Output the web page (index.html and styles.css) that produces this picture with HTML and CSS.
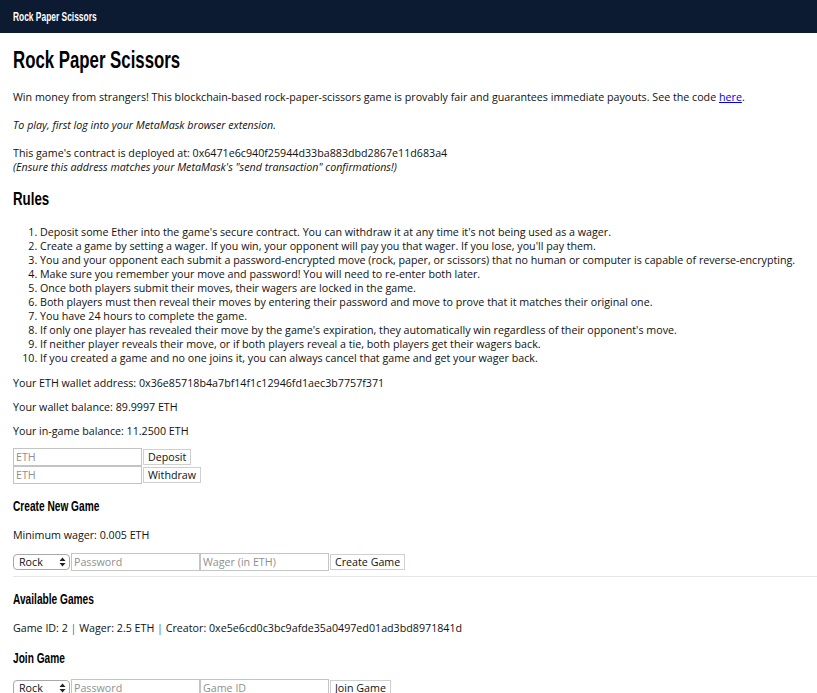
FILE: index.html
```html
<!DOCTYPE html>
<html>
<head>
<meta charset="utf-8">
<title>Rock Paper Scissors</title>
<link rel="stylesheet" href="styles.css">
</head>
<body>
<nav class="navbar"><span class="brand"><span class="cond">Rock Paper Scissors</span></span></nav>
<main class="main">
  <h1 class="title"><span class="cond">Rock Paper Scissors</span></h1>
  <p class="p-intro">Win money from strangers! This blockchain-based rock-paper-scissors game is provably fair and guarantees immediate payouts. See the code <a href="#" class="link">here</a>.</p>
  <p class="p-note"><em>To play, first log into your MetaMask browser extension.</em></p>
  <p class="p-note">This game's contract is deployed at: 0x6471e6c940f25944d33ba883dbd2867e11d683a4<br><em>(Ensure this address matches your MetaMask's "send transaction" confirmations!)</em></p>
  <h2 class="h-rules"><span class="cond">Rules</span></h2>
  <ol class="rules">
    <li>Deposit some Ether into the game's secure contract. You can withdraw it at any time it's not being used as a wager.</li>
    <li>Create a game by setting a wager. If you win, your opponent will pay you that wager. If you lose, you'll pay them.</li>
    <li>You and your opponent each submit a password-encrypted move (rock, paper, or scissors) that no human or computer is capable of reverse-encrypting.</li>
    <li>Make sure you remember your move and password! You will need to re-enter both later.</li>
    <li>Once both players submit their moves, their wagers are locked in the game.</li>
    <li>Both players must then reveal their moves by entering their password and move to prove that it matches their original one.</li>
    <li>You have 24 hours to complete the game.</li>
    <li>If only one player has revealed their move by the game's expiration, they automatically win regardless of their opponent's move.</li>
    <li>If neither player reveals their move, or if both players reveal a tie, both players get their wagers back.</li>
    <li>If you created a game and no one joins it, you can always cancel that game and get your wager back.</li>
  </ol>
  <p class="p-info">Your ETH wallet address: 0x36e85718b4a7bf14f1c12946fd1aec3b7757f371</p>
  <p class="p-info">Your wallet balance: 89.9997 ETH</p>
  <p class="p-info">Your in-game balance: 11.2500 ETH</p>
  <div class="funds">
    <div class="row"><input class="field" placeholder="ETH"><button class="btn">Deposit</button></div>
    <div class="row"><input class="field" placeholder="ETH"><button class="btn">Withdraw</button></div>
  </div>
  <h3 class="h-sec"><span class="cond">Create New Game</span></h3>
  <p class="p-sec">Minimum wager: 0.005 ETH</p>
  <div class="row row-game">
    <span class="select"><span class="select-text">Rock</span><svg class="select-arrows" width="7" height="10" viewBox="0 0 7 10"><path d="M0.5 4 L3.5 0.5 L6.5 4 Z M0.5 6 L3.5 9.5 L6.5 6 Z" fill="#222"/></svg></span>
    <input class="field" type="password" placeholder="Password">
    <input class="field" placeholder="Wager (in ETH)">
    <button class="btn">Create Game</button>
  </div>
  <hr class="rule">
  <h3 class="h-sec h-avail"><span class="cond">Available Games</span></h3>
  <p class="p-sec">Game ID: 2 <span class="sep">|</span> Wager: 2.5 ETH <span class="sep">|</span> Creator: 0xe5e6cd0c3bc9afde35a0497ed01ad3bd8971841d</p>
  <h3 class="h-sec h-join"><span class="cond">Join Game</span></h3>
  <div class="row row-game">
    <span class="select"><span class="select-text">Rock</span><svg class="select-arrows" width="7" height="10" viewBox="0 0 7 10"><path d="M0.5 4 L3.5 0.5 L6.5 4 Z M0.5 6 L3.5 9.5 L6.5 6 Z" fill="#222"/></svg></span>
    <input class="field" type="password" placeholder="Password">
    <input class="field" placeholder="Game ID">
    <button class="btn">Join Game</button>
  </div>
</main>
</body>
</html>
```
FILE: styles.css
```css
* { box-sizing: border-box; }
html, body { margin: 0; padding: 0; background: #fff; }
body {
  font-family: "Open Sans", "DejaVu Sans", sans-serif;
  font-size: 10.7px;
  line-height: 14px;
  color: #111;
}
.cond {
  display: inline-block;
  transform: scaleX(0.7);
  transform-origin: left center;
  white-space: nowrap;
}
.navbar {
  height: 33px;
  background: #0d1b32;
  padding-left: 13px;
  display: flex;
  align-items: center;
}
.brand {
  color: #fff;
  font-family: "Liberation Sans", Arial, sans-serif;
  font-weight: bold;
  font-size: 12px;
  line-height: 14px;
}
.main { padding: 0 0 20px 13px; }
.title {
  font-family: "Liberation Sans", Arial, sans-serif;
  font-weight: bold;
  font-size: 24px;
  line-height: 30px;
  margin: 12px 0 15px;
  color: #000;
}
p { margin: 0; }
.p-intro { margin-bottom: 14px; }
.p-note { margin-bottom: 14px; }
.link { color: #0000ee; text-decoration: underline; }
.h-rules {
  font-family: "Liberation Sans", Arial, sans-serif;
  font-weight: bold;
  font-size: 19px;
  line-height: 22px;
  margin: 13px 0 15px;
  color: #000;
}
.rules { margin: 0 0 11px; padding-left: 27px; }
.rules li { line-height: 14px; }
.p-info { margin-bottom: 10px; }
.funds { margin-top: 2px; margin-bottom: 13px; }
.row { display: flex; align-items: flex-end; }
.field {
  width: 129px;
  height: 18px;
  border: 1px solid #c4c4c4;
  padding: 0 2px;
  font-family: "Open Sans", "DejaVu Sans", sans-serif;
  font-size: 10.7px;
  color: #222;
  margin: 0;
  outline: none;
  background: #fff;
}
.field::placeholder { color: #8f8f8f; }
.btn {
  height: 16px;
  margin: 0 0 1px 1px;
  padding: 0 4px;
  border: 1px solid #cfcfcf;
  background: #fff;
  font-family: "Open Sans", "DejaVu Sans", sans-serif;
  font-size: 10.7px;
  line-height: 14px;
  color: #111;
}
.h-sec {
  font-family: "Liberation Sans", Arial, sans-serif;
  font-weight: bold;
  font-size: 14.5px;
  line-height: 18px;
  margin: 0 0 13px;
  color: #000;
}
.p-sec { margin-bottom: 11px; }
.row-game { align-items: center; }
.select {
  position: relative;
  width: 57px;
  height: 16px;
  border: 1px solid #a8a8a8;
  border-radius: 4px;
  background: #fff;
  display: flex;
  align-items: center;
  padding-left: 5px;
  margin-right: 1px;
}
.select-text { font-size: 10.7px; line-height: 14px; }
.select-arrows { position: absolute; right: 3px; top: 2px; }
.rule {
  border: 0;
  border-top: 1px solid #e6e6e6;
  margin: 5px 0 13px;
}
.h-avail { margin-bottom: 13px; }
.sep { color: #3a6ea5; }
.h-join { margin-top: 14px; margin-bottom: 12px; }
```
